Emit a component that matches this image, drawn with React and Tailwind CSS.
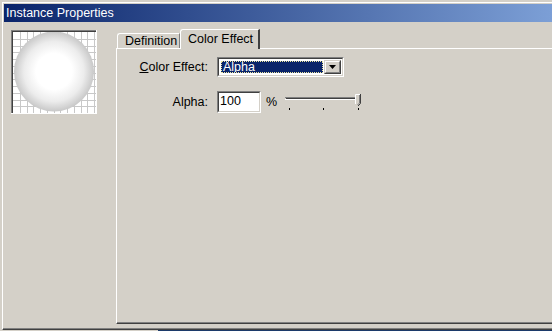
import React from "react";

function Thumb() {
  const step = 6.75;
  const vs = [];
  for (let x = 2 + step; x < 85; x += step) vs.push(Math.round(x) + 0.5);
  const hs = [];
  for (let y = 2 + step; y < 83; y += step) hs.push(Math.round(y) + 0.5);
  return (
    <svg width="86" height="84" viewBox="0 0 86 84" className="block">
      <defs>
        <radialGradient id="ball" cx="50%" cy="50%" r="50%">
          <stop offset="0%" stopColor="#ffffff" />
          <stop offset="45%" stopColor="#ffffff" />
          <stop offset="75%" stopColor="#ececec" />
          <stop offset="100%" stopColor="#c8c8c8" />
        </radialGradient>
      </defs>
      <rect x="0" y="0" width="86" height="84" fill="#ffffff" />
      {vs.map((x) => (
        <line key={"v" + x} x1={x} y1="0" x2={x} y2="84" stroke="#c8c8c8" strokeWidth="1" />
      ))}
      {hs.map((y) => (
        <line key={"h" + y} x1="0" y1={y} x2="86" y2={y} stroke="#c8c8c8" strokeWidth="1" />
      ))}
      <circle cx="43" cy="41.5" r="40" fill="url(#ball)" />
      <rect x="0" y="0" width="86" height="1" fill="#808080" />
      <rect x="0" y="0" width="1" height="84" fill="#808080" />
      <rect x="1" y="1" width="84" height="1" fill="#404040" />
      <rect x="1" y="1" width="1" height="82" fill="#404040" />
      <rect x="0" y="83" width="86" height="1" fill="#ffffff" />
      <rect x="85" y="0" width="1" height="84" fill="#ffffff" />
    </svg>
  );
}

function Slider() {
  return (
    <svg width="80" height="18" viewBox="0 0 80 18" className="block">
      <rect x="0" y="3" width="76" height="1" fill="#808080" />
      <rect x="1" y="4" width="74" height="1" fill="#404040" />
      <rect x="0" y="5" width="76" height="1" fill="#ffffff" />
      <rect x="4" y="14" width="1" height="2" fill="#000000" />
      <rect x="38" y="14" width="1" height="2" fill="#000000" />
      <rect x="73" y="14" width="1" height="2" fill="#000000" />
      <path d="M70.5 0.5 H75.5 V9.5 L73 12 L70.5 9.5 Z" fill="#d4d0c8" />
      <path d="M70.5 10 V0.5 H75" stroke="#ffffff" strokeWidth="1" fill="none" />
      <path d="M75.5 0 V9.5 L73 12" stroke="#404040" strokeWidth="1" fill="none" />
      <path d="M74.5 1 V9 L72.5 11" stroke="#808080" strokeWidth="1" fill="none" />
    </svg>
  );
}

export default function App() {
  return (
    <div className="w-[552px] h-[331px] bg-[#d4d0c8] overflow-hidden flex flex-col font-['Liberation_Sans',Arial,sans-serif] text-[12px] leading-none text-black">
      <div className="mt-[2px] ml-[2px] h-[328px] border-t border-l border-b border-t-white border-l-white border-b-[#404040]">
        <div className="h-full pt-px pl-px border-b border-[#808080] flex flex-col">
          <div className="h-[18px] bg-[linear-gradient(to_right,#0a246a,#7c9fd6)] flex items-center pl-[2px]">
            <span className="text-white text-[12.5px]">Instance Properties</span>
          </div>
          <div className="flex-1 flex">
            <div className="w-[112px] pl-[7px] pt-[8px]">
              <Thumb />
            </div>
            <div className="flex-1 flex flex-col pb-[4px]">
              <div className="h-[26px] flex items-end pl-px">
                <div className="w-[63px] h-[15px] border-t border-l border-r border-t-white border-l-white border-r-[#808080] rounded-tl-[3px] flex items-center pl-[7px] pt-[1px]">
                  <span className="text-[12.5px]">Definition</span>
                </div>
                <div className="relative z-10 -mb-px w-[80px] h-[20px] bg-[#d4d0c8] border-t border-l border-r-2 border-t-white border-l-white border-r-[#404040] rounded-tl-[3px] flex items-start pl-[7px] pt-[3px]">
                  <span className="text-[12.5px]">Color Effect</span>
                </div>
              </div>
              <div className="flex-1 border-t border-l border-b border-t-white border-l-white border-b-[#404040]">
                <div className="h-full border-b border-[#808080] pl-[22px] pt-[8px]">
                  <div className="grid grid-cols-[69px_auto] gap-x-[9px] gap-y-[14px] items-center w-fit">
                    <div className="text-right text-[12.5px]">
                      <span className="underline underline-offset-[1px]">C</span>olor Effect:
                    </div>
                    <div className="w-[127px] h-[20px] border border-t-[#808080] border-l-[#808080] border-b-white border-r-white">
                      <div className="h-full border border-t-[#404040] border-l-[#404040] border-b-[#d4d0c8] border-r-[#d4d0c8] bg-white flex p-px">
                        <div className="flex-1 my-px ml-px bg-[#0a246a] border border-dotted border-[#ece6a0] flex items-center pl-px overflow-hidden">
                          <span className="text-white text-[12.5px] leading-[12px]">Alpha</span>
                        </div>
                        <div className="w-[17px] h-full ml-px border border-t-[#d4d0c8] border-l-[#d4d0c8] border-b-[#404040] border-r-[#404040]">
                          <div className="h-full bg-[#d4d0c8] border border-t-white border-l-white border-b-[#808080] border-r-[#808080] flex items-center justify-center">
                            <svg width="7" height="4" viewBox="0 0 7 4" className="block">
                              <path d="M0 0 H7 L3.5 4 Z" fill="#000" />
                            </svg>
                          </div>
                        </div>
                      </div>
                    </div>
                    <div className="text-right text-[12.5px]">Alpha:</div>
                    <div className="flex items-center">
                      <div className="w-[44px] h-[22px] border border-t-[#808080] border-l-[#808080] border-b-white border-r-white">
                        <div className="h-full border border-t-[#404040] border-l-[#404040] border-b-[#d4d0c8] border-r-[#d4d0c8] bg-white flex items-start pl-[1px] pt-[2px]">
                          <span className="text-[12.5px]">100</span>
                        </div>
                      </div>
                      <span className="ml-[5px] w-[11px] text-[12.5px]">%</span>
                      <div className="ml-[8px] mt-[1px]">
                        <Slider />
                      </div>
                    </div>
                  </div>
                </div>
              </div>
            </div>
          </div>
        </div>
      </div>
      <div className="h-px flex">
        <div className="w-[158px] bg-[#d4d0c8]" />
        <div className="flex-1 bg-[#1c3a6a]" />
      </div>
    </div>
  );
}
